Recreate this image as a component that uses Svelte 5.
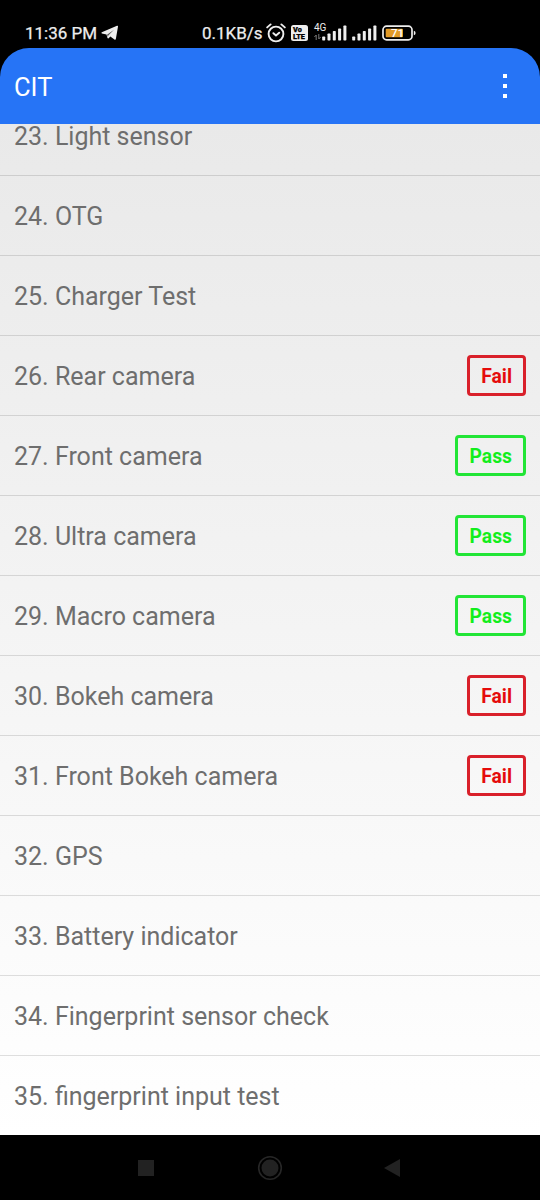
<script>
    const tests = [
        { id: 23, name: 'Light sensor' },
        { id: 24, name: 'OTG' },
        { id: 25, name: 'Charger Test' },
        { id: 26, name: 'Rear camera', result: 'Fail' },
        { id: 27, name: 'Front camera', result: 'Pass' },
        { id: 28, name: 'Ultra camera', result: 'Pass' },
        { id: 29, name: 'Macro camera', result: 'Pass' },
        { id: 30, name: 'Bokeh camera', result: 'Fail' },
        { id: 31, name: 'Front Bokeh camera', result: 'Fail' },
        { id: 32, name: 'GPS' },
        { id: 33, name: 'Battery indicator' },
        { id: 34, name: 'Fingerprint sensor check' },
        { id: 35, name: 'fingerprint input test' },
    ];

    const bars = [4, 7, 9.5, 12, 15];
</script>

<div class="screen">
    <div class="status-bar">
        <span class="clock">11:36 PM</span>
        <svg class="telegram" width="18" height="16" viewBox="0 0 18 16">
            <path d="M.8 7.2 16 .8q1.2-.4 1 .8l-2.1 12.2q-.3 1.4-1.5.6L9.4 11.4 7.6 13.2Q6.6 13.8 6.3 12.6L5.5 9.6.8 8.4Q0 7.8.8 7.2Z" fill="#eee" />
            <path d="M6 9.7 13 4.8 7.3 10.6 6.9 12Z" fill="#555" />
        </svg>

        <span class="speed">0.1KB/s</span>
        <svg class="alarm" width="20" height="20" viewBox="0 0 20 20" fill="none" stroke="#eee" stroke-width="1.9" stroke-linecap="round">
            <circle cx="10" cy="11" r="7.4" />
            <path d="M1.2 4.4 4.6 1.4M18.8 4.4l-3.4-3M7.4 10.2l2.6 2.3 3.2-2.8" />
        </svg>
        <span class="volte"><span>Vo</span><span>LTE</span></span>
        <div class="network">
            <span class="network-type">4G</span>
            <svg width="7" height="6" viewBox="0 0 7 6" fill="none" stroke="#777" stroke-width="1">
                <path d="M2.2 6V1M.4 3 2.2 1M4.8 0v5M6.6 3 4.8 5" />
            </svg>
        </div>
        {#each ['sim1', 'sim2'] as sim}
            <svg class="signal {sim}" width="25" height="16" viewBox="0 0 25 16">
                {#each bars as height, i}
                    <rect x={i * 5.3 + 0.2} y={15.5 - height} width="3" {height} rx=".7" fill="#eee" />
                {/each}
            </svg>
        {/each}
        <svg class="battery" width="34" height="16" viewBox="0 0 34 16">
            <rect x="1" y="1.2" width="29" height="13.6" rx="3.6" fill="none" stroke="#eee" stroke-width="1.7" />
            <rect x="3.7" y="3.8" width="17.3" height="8.4" rx="1" fill="#e29a26" />
            <path d="M31.8 5.8q1.8.2 1.8 2.2t-1.8 2.2Z" fill="#eee" />
            <text x="15.5" y="12" text-anchor="middle">71</text>
        </svg>
    </div>

    <header class="app-bar">
        <h1>CIT</h1>
        <button class="menu" aria-label="More options">
            <i></i><i></i><i></i>
        </button>
    </header>

    <main>
        <ul>
            {#each tests as test (test.id)}
                <li>
                    <span>{test.id}. {test.name}</span>
                    {#if test.result}
                        <b class="badge" class:pass={test.result === 'Pass'}>{test.result}</b>
                    {/if}
                </li>
            {/each}
        </ul>
    </main>

    <nav>
        <svg width="18" height="18" viewBox="0 0 18 18" fill="#222"><rect x="1" y="1" width="16" height="16" /></svg>
        <svg class="home" width="26" height="26" viewBox="0 0 26 26">
            <circle cx="13" cy="13" r="11.3" fill="none" stroke="#262626" stroke-width="1.6" />
            <circle cx="13" cy="13" r="8.5" fill="#222" />
        </svg>
        <svg width="18" height="18" viewBox="0 0 18 18" fill="#222"><path d="M1 9 17 0v18Z" /></svg>
    </nav>
</div>

<style>
    :global(body) {
        background: #000;
    }

    .screen {
        display: flex;
        flex-direction: column;
        width: 540px;
        height: 1200px;
        overflow: hidden;
        background: #000;
        font-family: Roboto, sans-serif;
    }

    .status-bar {
        display: flex;
        align-items: center;
        flex: none;
        box-sizing: border-box;
        height: 48px;
        padding: 17px 0 0 25px;
        color: #eee;
        font-size: 17px;
        font-weight: 400;
        white-space: nowrap;
        -webkit-text-stroke: 0.25px;
    }

    .status-bar svg {
        flex: none;
    }

    .clock {
        width: 76px;
    }

    .speed {
        width: 64px;
        margin-left: 83px;
    }

    .volte {
        display: flex;
        flex-direction: column;
        justify-content: center;
        width: 17px;
        height: 16px;
        margin-left: 5px;
        border-radius: 2.5px;
        background: #eee;
        color: #000;
        font-size: 7.3px;
        font-weight: 900;
        line-height: 7px;
        text-indent: 2px;
    }

    .volte span {
        height: 7px;
    }

    .network {
        display: flex;
        flex-direction: column;
        gap: 1px;
        width: 8px;
        height: 19px;
        margin-left: 6px;
    }

    .network-type {
        font-size: 10px;
        line-height: 10px;
        -webkit-text-stroke: 0;
    }

    .sim2 {
        margin-left: 5px;
    }

    .battery {
        margin-left: 5px;
    }

    .battery text {
        fill: #fff;
        font-size: 11.5px;
        font-weight: 500;
    }

    .app-bar {
        display: flex;
        align-items: center;
        justify-content: space-between;
        flex: none;
        box-sizing: border-box;
        height: 76px;
        padding: 2px 33px 0 14px;
        border-radius: 29px 29px 0 0;
        background: #2674f6;
    }

    h1 {
        margin: 0;
        color: #fff;
        font-size: 25.5px;
        font-weight: 400;
    }

    .menu {
        display: flex;
        flex-direction: column;
        gap: 6px;
        margin: 0 0 2px;
        padding: 0;
        border: 0;
        background: none;
    }

    .menu i {
        width: 4px;
        height: 4px;
        background: #fff;
    }

    main {
        flex: none;
        height: 1011px;
        overflow: hidden;
        background: linear-gradient(#e9e9e9, #fff);
    }

    /* the first row is scrolled partly under the app bar */
    ul {
        margin: -28px 0 0;
        padding: 0;
        list-style: none;
    }

    li {
        display: flex;
        align-items: center;
        justify-content: space-between;
        box-sizing: border-box;
        height: 80px;
        padding: 1px 14px 0;
        border-bottom: 1px solid rgba(0, 0, 0, 0.12);
        color: #6e6e6e;
        font-size: 25px;
    }

    .badge {
        box-sizing: border-box;
        height: 41px;
        margin-bottom: 2px;
        padding: 0 11px 0 11.5px;
        border: 3px solid #d9202a;
        border-radius: 4px;
        color: #e50b0b;
        font-size: 19.3px;
        font-weight: 700;
        line-height: 38px;
    }

    .badge.pass {
        border-color: #22e536;
        color: #12ee1c;
    }

    nav {
        display: flex;
        align-items: center;
        justify-content: space-between;
        flex: 1;
        padding: 0 139px 0 137px;
    }

    .home {
        margin-left: 2px;
    }
</style>
